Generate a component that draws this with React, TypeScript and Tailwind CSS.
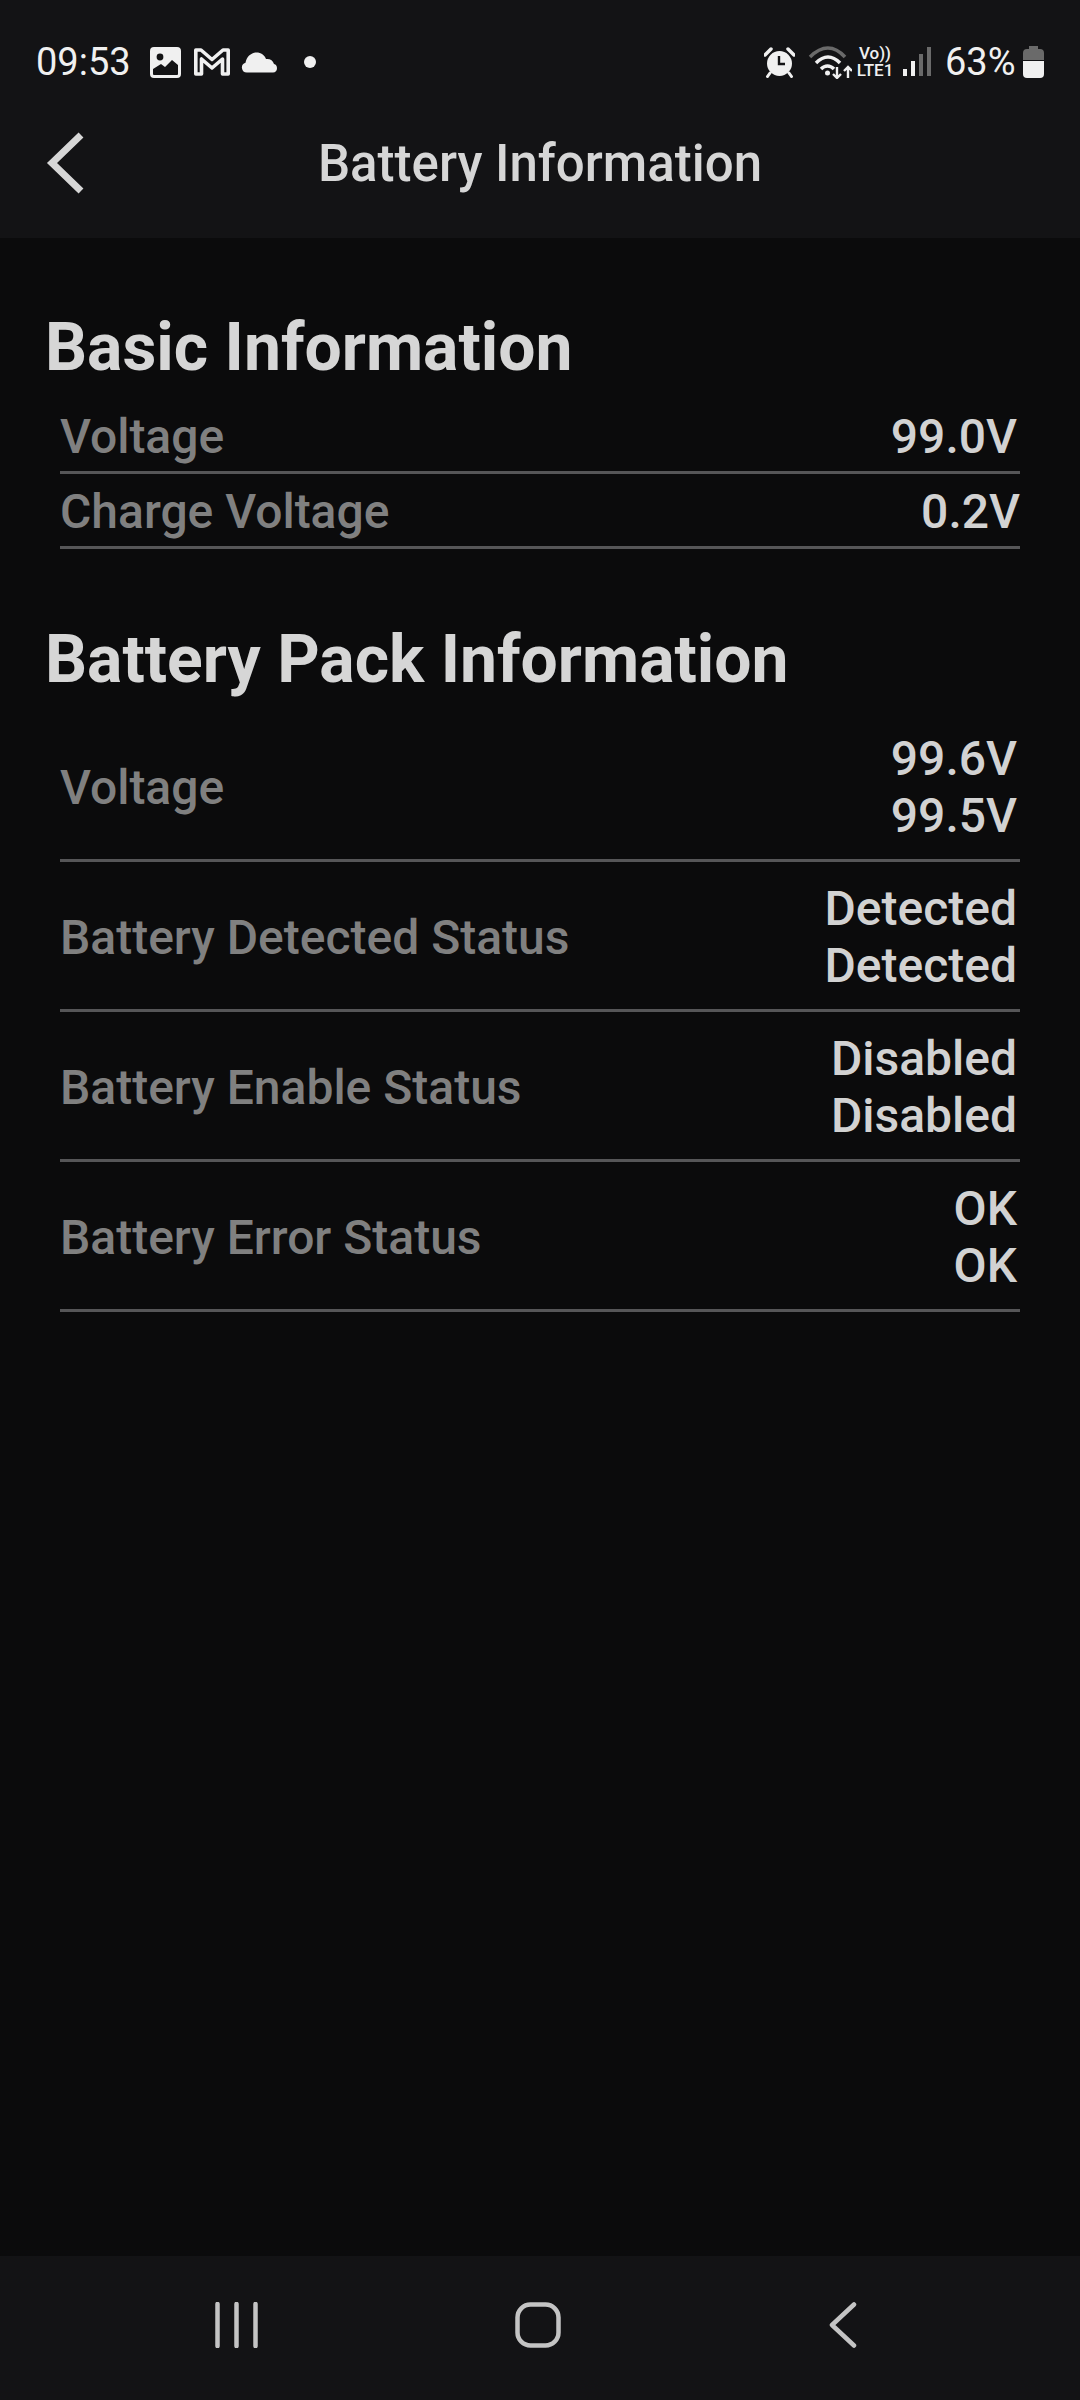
import React from "react";

const font = { fontFamily: "Roboto, sans-serif" };

function Row({ label, values, tall, flush }: { label: string; values: string[]; tall?: boolean; flush?: boolean }) {
  return (
    <div className={`flex items-center justify-between border-b-[3px] border-[#565658] pt-[3px] ${flush ? "pr-0" : "pr-[3px]"} ${tall ? "h-[150px]" : "h-[75px]"}`}>
      <span className="text-[48px] leading-[57px] font-medium text-[#808080]">{label}</span>
      <div className="flex flex-col items-end text-[48px] leading-[57px] text-[#d2d2d2] font-medium">
        {values.map((v, i) => (
          <span key={i}>{v}</span>
        ))}
      </div>
    </div>
  );
}

function StatusBar() {
  return (
    <div className="flex h-[84px] items-end justify-between pl-[36px] pr-[36px] text-[#f0f0f0]">
      <div className="flex items-center">
        <span className="text-[38px] leading-[44px] w-[93px]">09:53</span>
        <svg className="ml-[21px]" width="31" height="31" viewBox="0 0 31 31">
          <path fillRule="evenodd" fill="#f0f0f0" d="M4 0h23a4 4 0 0 1 4 4v23a4 4 0 0 1-4 4H4a4 4 0 0 1-4-4V4a4 4 0 0 1 4-4zM3 22v5a1 1 0 0 0 1 1h23a1 1 0 0 0 1-1V18l-6-5-7 7-4-3z" />
          <circle cx="10" cy="10" r="3.4" fill="#131315" />
        </svg>
        <svg className="ml-[13px]" width="36" height="28" viewBox="0 0 36 28">
          <path fill="none" stroke="#f0f0f0" strokeWidth="3.600" strokeLinejoin="round" d="M1.800 26V2h5.200L18 11.500 29 2h5.200v24h-5.700V11L18 20 7.500 11v15z" />
        </svg>
        <svg className="ml-[11px]" width="36" height="21" viewBox="0 0 36 21">
          <path fill="#f0f0f0" d="M6 20.5a5 5 0 0 1-1.5-9.8C5.500 5 10 0.500 15.500 0.500c4.500 0 8 2.500 9.500 6.500 4-.5 7 1.500 8 5 2 .5 3 2 3 4.200 0 2.500-1.500 4.300-4 4.300z" />
        </svg>
        <div className="ml-[27px] h-[12px] w-[12px] rounded-full bg-[#f0f0f0]" />
      </div>
      <div className="flex items-center">
        <svg width="31" height="31" viewBox="0 0 31 31">
          <circle cx="15.500" cy="16.500" r="12.500" fill="#f0f0f0" />
          <path d="M15 9v8h6" fill="none" stroke="#131315" strokeWidth="2.400" />
          <path d="M1 8l6-6M30 8l-6-6" stroke="#f0f0f0" strokeWidth="3.500" strokeLinecap="round" />
          <path d="M6 26l-2.500 3.500M25 26l2.500 3.500" stroke="#f0f0f0" strokeWidth="3" strokeLinecap="round" />
        </svg>
        <svg className="ml-[13px]" width="44" height="34" viewBox="0 0 44 34">
          <path d="M2 12C14 0 26 0 37 12" fill="none" stroke="#6a6a6a" strokeWidth="3.500" />
          <path d="M8 18c8-8 16-8 24 0" fill="none" stroke="#f0f0f0" strokeWidth="3.500" />
          <path d="M13 24c4-4 9-4 13 0" fill="none" stroke="#f0f0f0" strokeWidth="3.500" />
          <circle cx="19.500" cy="28" r="2.500" fill="#f0f0f0" />
          <path d="M29 22v11m-4-4l4 4 4-4M40 33V22m-4 4l4-4 4 4" fill="none" stroke="#f0f0f0" strokeWidth="2.400" />
        </svg>
        <div className="ml-[3px] flex w-[40px] flex-col items-center font-medium">
          <span className="text-[17px] leading-[17px]">Vo))</span>
          <span className="text-[17px] leading-[17px]">LTE1</span>
        </div>
        <svg className="ml-[8px]" width="29" height="30" viewBox="0 0 29 30">
          <rect x="0" y="22" width="4" height="7" fill="#f0f0f0" />
          <rect x="8" y="14" width="4" height="15" fill="#f0f0f0" />
          <rect x="16" y="7" width="4" height="22" fill="#6a6a6a" />
          <rect x="24" y="0" width="4" height="29" fill="#6a6a6a" />
        </svg>
        <span className="ml-[13px] w-[70px] text-[38px] leading-[44px]">63%</span>
        <svg className="ml-[8px]" width="21" height="32" viewBox="0 0 21 32">
          <path fill="#6a6a6a" d="M6 0h9v3h2a4 4 0 0 1 4 4v7H0V7a4 4 0 0 1 4-4h2z" />
          <path fill="#f0f0f0" d="M0 15h21v13a4 4 0 0 1-4 4H4a4 4 0 0 1-4-4z" />
        </svg>
      </div>
    </div>
  );
}

export default function App() {
  return (
    <div className="flex h-[2400px] w-[1080px] flex-col bg-[#0b0b0c]" style={font}>
      <header className="h-[238px] bg-[#131315]">
        <StatusBar />
        <div className="relative flex h-[160px] items-center justify-center">
          <svg className="absolute left-[45px] top-[47px]" width="40" height="64" viewBox="0 0 40 64">
            <path d="M36 4 L7 32 L36 60" fill="none" stroke="#d6d6d6" strokeWidth="7" />
          </svg>
          <span className="text-[51px] font-medium leading-[56px] text-[#d6d6d6]">Battery Information</span>
        </div>
      </header>
      <main className="flex-1 pt-[68px]">
        <section>
          <h2 className="ml-[45px] text-[66px] font-bold leading-[84px] text-[#d6d6d6]">Basic Information</h2>
          <div className="mx-[60px] mt-[9px]">
            <Row label="Voltage" values={["99.0V"]} />
            <Row flush label="Charge Voltage" values={["0.2V"]} />
          </div>
        </section>
        <section className="mt-[69px]">
          <h2 className="ml-[45px] text-[66px] font-bold leading-[84px] text-[#d6d6d6]">Battery Pack Information</h2>
          <div className="mx-[60px] mt-[10px]">
            <Row tall label="Voltage" values={["99.6V", "99.5V"]} />
            <Row tall label="Battery Detected Status" values={["Detected", "Detected"]} />
            <Row tall label="Battery Enable Status" values={["Disabled", "Disabled"]} />
            <Row tall label="Battery Error Status" values={["OK", "OK"]} />
          </div>
        </section>
      </main>
      <nav className="flex h-[144px] items-start bg-[#131315] pt-[46px]">
        <svg className="ml-[215px]" width="44" height="46" viewBox="0 0 44 46">
          <path d="M2.500 2v42M21.500 2v42M40.500 2v42" stroke="#c4c4c4" strokeWidth="4.500" strokeLinecap="round" />
        </svg>
        <svg className="ml-[256px]" width="46" height="46" viewBox="0 0 46 46">
          <rect x="2.500" y="2.500" width="41" height="41" rx="13" fill="none" stroke="#c4c4c4" strokeWidth="4.500" />
        </svg>
        <svg className="ml-[268px]" width="28" height="46" viewBox="0 0 28 46">
          <path d="M25 2.500 L3 23 L25 43.500" fill="none" stroke="#c4c4c4" strokeWidth="4.500" strokeLinecap="round" strokeLinejoin="round" />
        </svg>
      </nav>
    </div>
  );
}
